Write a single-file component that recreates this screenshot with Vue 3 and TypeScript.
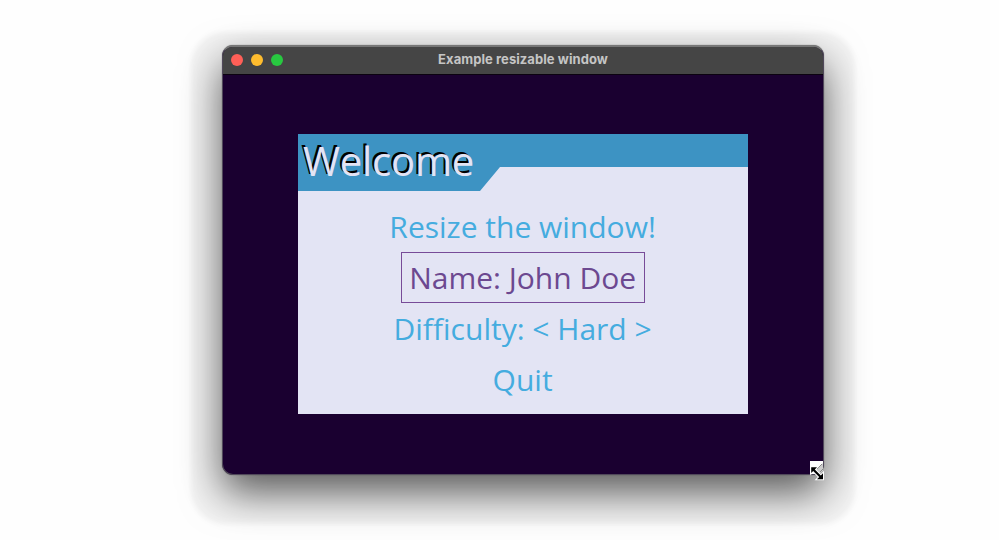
<script setup lang="ts">
import { ref } from 'vue'

interface MenuItem {
  label: string
}

const title = 'Example resizable window'
const items: MenuItem[] = [
  { label: 'Resize the window!' },
  { label: 'Name: John Doe' },
  { label: 'Difficulty: < Hard >' },
  { label: 'Quit' },
]
const selected = ref(1)
</script>

<template>
  <main class="desktop">
    <section class="window">
      <header class="titlebar">
        <div class="lights">
          <span class="light close"></span>
          <span class="light minimize"></span>
          <span class="light zoom"></span>
        </div>
        <span class="caption">{{ title }}</span>
      </header>
      <div class="surface">
        <div class="menu">
          <div class="menu-head">
            <svg class="banner" width="450" height="57" viewBox="0 0 450 57">
              <path d="M0 0H450V33H202L182 57H0Z" fill="#3d93c3" />
            </svg>
            <h1 class="menu-title">Welcome</h1>
          </div>
          <ul class="entries">
            <li
              v-for="(item, i) in items"
              :key="item.label"
              class="entry"
              :class="{ selected: i === selected }"
              @mouseenter="selected = i"
            >{{ item.label }}</li>
          </ul>
        </div>
      </div>
      <svg class="grip" width="16" height="21" viewBox="0 0 16 21">
        <path d="M0 0H13V9L9 13H0Z" fill="#fff" />
        <path d="M6 9L13 2V9L9 13Z" fill="#ccc" />
        <path d="M7 8L12 3M10 11L13 8" stroke="#888" stroke-width="1" fill="none" />
        <path
          class="arrow"
          d="M1.2 6.2H7L4.8 8.4L10.8 14.4L13 12.2V18.2H7L9.2 16L3.2 10L1.2 12Z"
        />
      </svg>
    </section>
  </main>
</template>

<style>
body {
  margin: 0;
  background: #fefefe;
}
</style>

<style scoped>
.desktop {
  box-sizing: border-box;
  width: 999px;
  height: 540px;
  padding: 45px 0 0 222px;
  overflow: hidden;
}
.window {
  position: relative;
  box-sizing: border-box;
  display: flex;
  flex-direction: column;
  width: 602px;
  height: 430px;
  border: 1px solid #50485a;
  border-top: 2px solid #777;
  border-radius: 11px;
  background: #1a0030;
  box-shadow:
    0 0 1px rgba(0, 0, 0, 0.6),
    0 18px 40px rgba(0, 0, 0, 0.63),
    0 18px 5px 31px rgba(0, 0, 0, 0.045);
}
.titlebar {
  box-sizing: border-box;
  display: grid;
  grid-template-columns: 1fr auto 1fr;
  align-items: center;
  height: 28px;
  padding: 0 8px 1px;
  border-bottom: 1px solid #0b0210;
  border-radius: 9px 9px 0 0;
  background: #454545;
}
.lights {
  display: flex;
  gap: 8px;
}
.light {
  width: 12px;
  height: 12px;
  border-radius: 50%;
}
.close {
  background: #ff5f57;
}
.minimize {
  background: #febc2e;
}
.zoom {
  background: #28c840;
}
.caption {
  padding-bottom: 2px;
  color: #c5c5c5;
  font: 700 13px/16px Inter, sans-serif;
  letter-spacing: 0.07px;
}
.surface {
  flex: 1;
  padding: 59px 75px 0;
}
.menu {
  width: 450px;
  height: 280px;
  background: #e3e4f4;
  font-family: "Open Sans", sans-serif;
}
.menu-head {
  display: grid;
  height: 57px;
}
.banner,
.menu-title {
  grid-area: 1 / 1;
}
.menu-title {
  margin: 0;
  padding-left: 5px;
  color: #e3e4f4;
  font-size: 40px;
  font-weight: 400;
  letter-spacing: -0.15px;
  line-height: 54px;
  text-shadow: -2px -2px 0 #000;
}
.entries {
  display: flex;
  flex-direction: column;
  align-items: center;
  margin: 0;
  padding: 10px 0 0;
  list-style: none;
}
.entry {
  box-sizing: border-box;
  height: 51px;
  padding: 4px 8.4px 4px 7.6px;
  border: 1px solid transparent;
  color: #45acdf;
  font-size: 30px;
  line-height: 41px;
  white-space: pre;
}
.entry.selected {
  border-color: #774b98;
  color: #6c4890;
}
.grip {
  position: absolute;
  left: 587px;
  top: 414px;
}
.arrow {
  fill: #000;
  stroke: #fff;
  stroke-width: 2px;
  paint-order: stroke;
}
</style>
